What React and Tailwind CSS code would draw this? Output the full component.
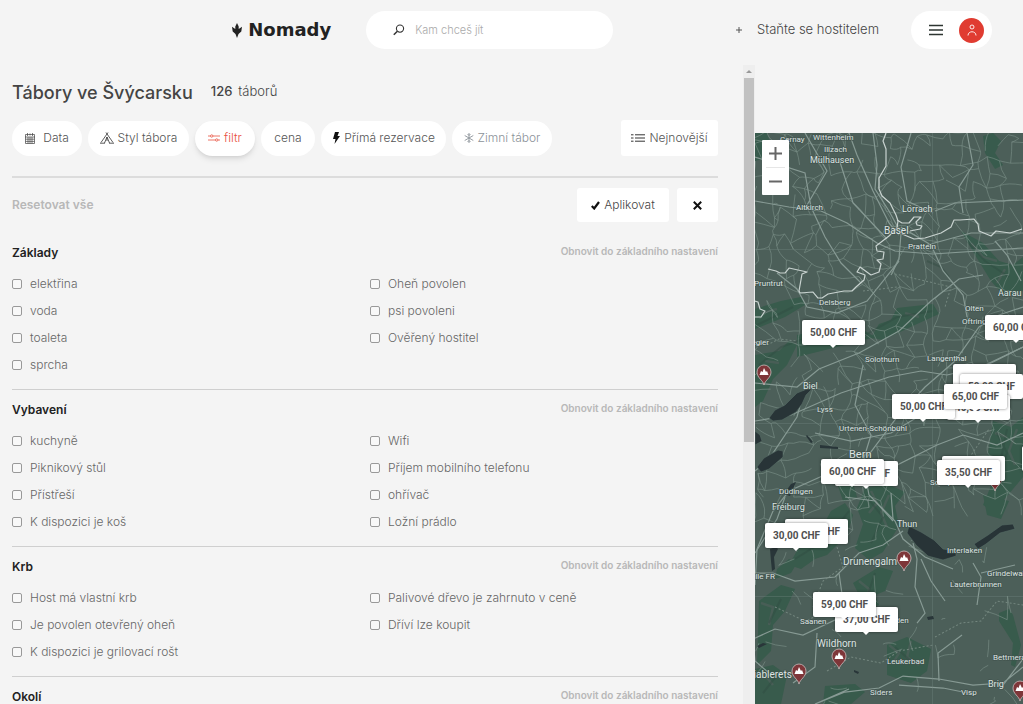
import React from 'react';

const groups = [
  {
    title: 'Základy',
    left: ['elektřina', 'voda', 'toaleta', 'sprcha'],
    right: ['Oheň povolen', 'psi povoleni', 'Ověřený hostitel'],
  },
  {
    title: 'Vybavení',
    left: ['kuchyně', 'Piknikový stůl', 'Přístřeší', 'K dispozici je koš'],
    right: ['Wifi', 'Příjem mobilního telefonu', 'ohřívač', 'Ložní prádlo'],
  },
  {
    title: 'Krb',
    left: ['Host má vlastní krb', 'Je povolen otevřený oheň', 'K dispozici je grilovací rošt'],
    right: ['Palivové dřevo je zahrnuto v ceně', 'Dříví lze koupit'],
  },
  { title: 'Okolí', left: [], right: [] },
];

// x, y, text, font size
const places = [
  [25, 9, 'Cernay', 8], [58, 7, 'Wittenheim', 8], [69, 19, 'Illzach', 8], [55, 30, 'Mülhausen', 9],
  [41, 77, 'Altkirch', 8], [147, 79, 'Lörrach', 9], [129, 101, 'Basel', 10], [153, 116, 'Pratteln', 8],
  [-1, 153, 'Pruntrut', 8], [64, 172, 'Delsberg', 8], [243, 163, 'Aarau', 9], [210, 178, 'Olten', 8],
  [207, 191, 'Oftringen', 8], [-8, 212, 'Tegier', 8], [110, 229, 'Solothurn', 8], [172, 228, 'Langenthal', 8],
  [48, 256, 'Biel', 9], [62, 279, 'Lyss', 8], [84, 298, 'Urtenen-Schönbühl', 8], [94, 325, 'Bern', 11],
  [175, 352, 'Schüpfheim', 8], [24, 361, 'Düdingen', 8], [17, 377, 'Freiburg', 9], [142, 394, 'Thun', 9],
  [88, 432, 'Drunengalm', 10], [192, 420, 'Interlaken', 8], [232, 443, 'Grindelwald', 8], [195, 454, 'Lauterbrunnen', 8],
  [-4, 446, 'ulle FR', 8], [45, 491, 'Saanen', 8], [120, 490, 'Frutigden', 8], [62, 514, 'Wildhorn', 10],
  [132, 531, 'Leukerbad', 8], [238, 527, 'Bettmeralp', 8], [-8, 545, 'Diablerets', 10], [115, 562, 'Siders', 8],
  [206, 562, 'Visp', 8], [233, 554, 'Brig', 9],
];

const pins = [[9, 252], [240, 358], [149, 438], [84, 536], [44, 551], [265, 568]];

// later entries lie on top of earlier ones
const prices = [
  [47, 187, '50,00 CHF'], [230, 182, '60,00 CHF'], [198, 231, ''], [205, 241, '50,00 CHF'],
  [192, 262, '40,65 CHF'], [137, 261, '50,00 CHF'], [189, 251, '65,00 CHF'], [80, 328, '45,00 CHF'],
  [66, 326, '60,00 CHF'], [187, 323, ''], [182, 327, '35,50 CHF'], [30, 386, '35,00 CHF'],
  [10, 390, '30,00 CHF'], [80, 474, '37,00 CHF'], [58, 459, '59,00 CHF'], [267, 313, ''],
];

// small local roads: a jittered mesh, sparse in the mountains
function localRoads() {
  let seed = 7;
  const rnd = () => {
    seed = (seed * 16807) % 2147483647;
    return seed / 2147483647;
  };
  const step = 13;
  const cols = 23;
  const rows = 46;
  const pts = [];
  for (let r = 0; r < rows; r++) {
    for (let c = 0; c < cols; c++) {
      pts.push([c * step - 5 + rnd() * 12, r * step - 5 + rnd() * 12]);
    }
  }
  let d = '';
  const link = (a, b) => {
    const mx = (a[0] + b[0]) / 2 + rnd() * 6 - 3;
    const my = (a[1] + b[1]) / 2 + rnd() * 6 - 3;
    d += `M${a[0].toFixed(1)} ${a[1].toFixed(1)}Q${mx.toFixed(1)} ${my.toFixed(1)} ${b[0].toFixed(1)} ${b[1].toFixed(1)}`;
  };
  for (let r = 0; r < rows - 1; r++) {
    for (let c = 0; c < cols - 1; c++) {
      const p = pts[r * cols + c];
      let chance = 0.6;
      if (p[1] > 370) chance = p[0] < 150 && p[1] < 410 ? 0.4 : 0.06;
      if (p[1] > 180 && p[1] < 240 && p[0] < 80) chance = 0.35;
      if (rnd() < chance) link(p, pts[r * cols + c + 1]);
      if (rnd() < chance) link(p, pts[(r + 1) * cols + c]);
      if (rnd() < chance * 0.3) link(p, pts[(r + 1) * cols + c + 1]);
    }
  }
  return d;
}

const roads = localRoads();

function MapCanvas() {
  return (
    <svg viewBox="0 0 268 571" preserveAspectRatio="xMinYMin slice" className="block h-full w-full" aria-label="Mapa">
      <rect width="268" height="571" fill="#4c5f59" />
      <g fill="#365b4b" opacity=".9">
        <path d="M0 0h12l4 12-8 14-8 2zM206 98l22 12 16 18 14 4 10-8v34l-18 6-14-16-16-26zM228 3l10-3 8 8-6 12 8 12-8 4-10-16z" />
        <path d="M0 176l26-8 20-4 4 8-20 12-30 12zM142 175l36-4 6 10-22 10-34 16-12-2 8-14 12-4zM0 222l24-4 10-10 8 4-10 20-14 14-10 22-8 6zM42 202l30-6 38 2 10 6-38 10-40 10z" />
        <path d="M238 288l18 6 12-10v60l-20 24-6 12-14-8 10-24-6-20zM110 355l22-4 18 8-10 14 4 20-16 26-14 8-14-12 8-24-6-16zM82 350h16l4 14-14 4z" />
        <path d="M76 378l14-8 8 12-6 20-20 20-12 4-14 10-12-4 10-18 20-14zM34 426l8 4-6 10-16 6 2-10zM228 362l26 6-8 18-14-4zM4 468l22-16 14 4-10 22-12 14-2 26-14 14zM132 512l20-8 24 12-4 22-16 12-24-8zM244 480l10-4 4 6 8 30-6 22-4-2 2-22-14-22z" />
        <path d="M0 536l18-4 14 10-6 29H0zM98 450l26-16 14 4-8 20-10 4 4 10-10 2-8-8zM70 553l30-2 10 8-14 12H68z" />
      </g>
      <g stroke="#4c5f59" strokeWidth="2.500" fill="none" opacity=".8">
        <path d="M134 512l10 8-6 10M156 508l-4 16 12 8M6 470l12 4-4 18M104 448l10 8-2 14M8 540l10 12M240 300l12 4M262 296l-8 22 6 14M236 338l14 4M116 358l6 12-8 10M134 362l-8 18 6 14" />
        <path d="M216 110l12 14 14 4M250 136l-8 14M6 180l16-4M10 228l14 2M64 200l20 4M150 180l14 4" />
      </g>
      <g stroke="#2f4a40" strokeWidth="2" fill="none" opacity=".4">
        <path d="M4 232l22-18 34-12M110 202l32-18 36-6M212 108l18 20 24 16M2 192l36-18M242 300l10 20-12 26M252 296l-6 30M40 426l32-20 22-28M110 362l18 22-12 26M14 490l12-24M8 560l14-18" />
        <path d="M172 128l14 6 8 10M120 440l-8 24M140 514l16 14" />
      </g>
      <path d={roads} fill="none" stroke="#7b8f88" strokeWidth=".9" opacity=".7" />
      <g fill="none" stroke="#879a94" strokeWidth="1.200">
        <path d="M0 68l34 6 32 4 26 12 30 20 18 8 38 3 90-6" />
        <path d="M118 0l4 32-2 24 14 22 12 22-2 26-8 16M94 0l8 22 16 36 16 32 10 12M84 26l14 44 34 36M0 24l50 16 6 34 14 30 16 26 20 20M50 0l22 38-20 34" />
        <path d="M146 94l30 18 12 26 20 24 4 22M240 108l12 14 14 26M172 112l44-12h52M180 78l20-8 68-3M212 0l6 32-14 22 4 26M156 0l-10 34 6 34 26 12" />
        <path d="M22 140l20 16 10 18 30 6 30-12 32-40M0 250l42 4 22-18 40-16 40-22 32-30 28-22 24-4M0 288l36-6 50-22 48-16 32-6 26 4 34-8 42-20" />
        <path d="M50 254l-8 30-28 42-14 12M108 232l-8 40 16 30-8 26M108 326l-34 14-40 18-16 20-16 38-2 36M108 326l34 6 40-20 26-10 34 10 26-12M108 330l6 32 26 26 8 18 22 18 28 12M112 324l30-40 28-30 30-26 24-34 20-12 24-8" />
        <path d="M60 300l36 8 40-8 50-30 30-30 52-26M90 364l30 4 18 20M136 360l2 26M0 440l18 0 22 8 40-4 24-24 24-8 20-14M84 440l4 28-6 18-34 16-28-6-22 10 2 22 14 12" />
        <path d="M62 500l-2 34-22 16M158 410l4 16-2 28 10 26-8 10M166 426l10 22 14 20M218 430l8 14-4 28M226 440l34-8M0 420l22-34 8-22" />
        <path d="M60 571l30-12 34-4 24-12 36 3 34 6 30-2 20-16M144 552l44 3 30 6M184 548l-1-28 24-18M248 552l20-26M94 556l-34 15M118 470l8 20" />
      </g>
      <path d="M177.500 0v571M0 463.500h268M0 290.500h268M0 116.500h268" stroke="#728780" strokeWidth=".6" opacity=".6" fill="none" />
      <path d="M12 212l12-6 18 2M108 158l34-4M136 140l60 14-6 20M212 328l22-32M82 414l6 20-20 14-10 26M180 504l26-14 20-2 16-20 26 4M72 538l24-14 30 6 18-12 34-6M20 474l30 14 14-6" fill="none" stroke="#74877f" strokeWidth="1" strokeDasharray="2 2" />
      <g fill="#283437" stroke="#566b65" strokeWidth=".6">
        <path d="M52 256l-10 4-12 12-10 5-6 8 4 3 9-1 14-8 6-8 4-9 6-6zM28 318v6l-14 12-8 3-4-5 7-9 14-8zM0 298l5 4 2 6-7 4z" />
        <path d="M154 393l12 6 13 8 9 9 13 2v5l-13 4-15-4-12-11-9-12zM219 411l14-9 14-10 11-1 2 5-15 4-14 11-8 5z" />
      </g>
      <path d="M15 416l6-2 2 2-4 8 1 12-3 2-1-10zM65 312l18 2v2l-18-1zM52 302l6 7-2 1-5-7zM29 361l7-10 5-2-6 14zM172 484l6-1 1 3-6 1zM2 513l6-3 4 1-8 4zM99 537l5 2-1 2-4-2z" fill="#293639" />
      <g fill="none" stroke="#c9d3d0" strokeWidth="1.200" strokeLinejoin="round">
        <path d="M131 0l-3 8 3 8v17l-7 12v11l3 7 8 7 6 12 2 6-1 7-8 8-13 10 1 5 7 1-1 7-6 1 4 4-2 8-8 3-11-8-3 5 8 3-1 5-8 7-4 4h-8l-16 3-6 4h-4l-5-6-13 1-1-2 3-17 5-2-9-2-9-2-4 5h-5l-4-2-8-2" />
        <path d="M142 87l5 3 7 0 5-6h7l-5 5 1 3 5 1-2 3-10 2M147 101l12 5 11-1 16-5 10-6 3-7 6 0 14-1 4 5 1 7 12 5 5-5 14 2 9-3 3-1" />
        <path d="M0 168l3 1 2 7 5 2-4 6H0" />
      </g>
      <g fontFamily="Roboto, 'Liberation Sans', sans-serif" fill="#dde3e1" stroke="#3f504b" strokeWidth="1.500" strokeOpacity=".7" paintOrder="stroke">
        {places.map(([x, y, name, size]) => (
          <text key={name} x={x} y={y} fontSize={size}>{name}</text>
        ))}
      </g>
      {pins.map(([x, y]) => (
        <g key={`${x}-${y}`} transform={`translate(${x} ${y})`}>
          <path d="M0 0C-1-5-7-7-7-13a7 7 0 0 1 14 0C7-7 1-5 0 0z" fill="#7e3639" stroke="#c9bcbc" strokeWidth=".8" />
          <path d="M-4.500-10l1.500-4 1.500 1 1.500-4 2 4 1-1 1.500 4z" fill="#fff" />
        </g>
      ))}
    </svg>
  );
}

function LogoMark() {
  return (
    <svg viewBox="0 0 10 15" className="h-[15px] w-[10px]" fill="#222" aria-hidden="true">
      <path d="M5 0l1.700 3.500v2.500L10 3.800 9.300 8.500 6.500 11 5 15l-1.500-4L.7 8.500 0 3.800 3.300 6V3.500z" />
    </svg>
  );
}

function Header() {
  return (
    <header className="flex h-[60px] shrink-0 items-center pl-[22.7%] pr-[31px]">
      <a href="#" className="flex items-center gap-1.5 text-[#222]">
        <LogoMark />
        <span className="font-['DejaVu_Sans',sans-serif] text-[18px] font-bold leading-6">Nomady</span>
      </a>
      <label className="ml-[35px] flex h-[38px] w-[247px] items-center gap-2.5 rounded-full bg-white pl-[27px] pr-5">
        <svg viewBox="0 0 12 12" className="size-3 shrink-0" fill="none" stroke="#333" strokeWidth="1.100" aria-hidden="true">
          <circle cx="7" cy="4.600" r="3.600" />
          <path d="M4.400 7.200L.8 10.800" strokeWidth="1.500" />
        </svg>
        <input type="text" aria-label="Kam chceš jít" placeholder="Kam chceš jít" className="w-full text-[11px] font-light outline-none placeholder:text-[#aaa]" />
      </label>
      <a href="#" className="ml-auto flex items-center gap-3.5 text-[#444]">
        <svg viewBox="0 0 8 8" className="size-2" stroke="#555" aria-hidden="true"><path d="M4 1v6M1 4h6" /></svg>
        <span className="whitespace-nowrap text-[13px] font-light">Staňte se hostitelem</span>
      </a>
      <div className="ml-8 flex h-[38px] items-center gap-4 rounded-full bg-white pl-[18px] pr-2">
        <button type="button" aria-label="Menu">
          <svg viewBox="0 0 14 12" className="h-3 w-3.5" stroke="#2d3531" strokeWidth="1.500" aria-hidden="true"><path d="M0 1.500h14M0 6h14M0 10.500h14" /></svg>
        </button>
        <button type="button" aria-label="Účet" className="flex size-[25px] items-center justify-center rounded-full bg-[#e03c31]">
          <svg viewBox="0 0 10 12" className="h-3 w-2.5" fill="none" stroke="#fff" strokeWidth=".9" aria-hidden="true">
            <circle cx="5" cy="3" r="2" />
            <path d="M1 11.500c0-5 8-5 8 0" />
          </svg>
        </button>
      </div>
    </header>
  );
}

function Filters() {
  const chip = 'flex h-[35px] items-center justify-center gap-1 whitespace-nowrap rounded-full bg-white';
  return (
    <div className="flex items-center gap-1.5 border-b-2 border-[#dcdcdc] pb-5 text-[12px] font-light text-[#555]">
      <button type="button" className={`${chip} w-[70px]`}>
        <svg viewBox="0 0 10 11" className="mr-1 h-[11px] w-2.5" fill="none" stroke="#444" strokeWidth=".7" aria-hidden="true">
          <path d="M.5 1.500h9v9h-9zM0 4h10M.5 6.200h9M.5 8.400h9M3 4v6.500M5 4v6.500M7 4v6.500M2.500 0v3M5 .5v2M7.500 0v3" />
        </svg>
        Data
      </button>
      <button type="button" className={`${chip} w-[101px]`}>
        <svg viewBox="0 0 14 12" className="h-3 w-3.5" fill="none" stroke="#333" strokeWidth=".8" aria-hidden="true">
          <path d="M6 .5L13 10.500M8 .5L1 10.500M7 5l-2.500 6M7 5l2.500 6M7 5v4M0 11.200h5M9 11.200h5" />
        </svg>
        Styl tábora
      </button>
      <button type="button" className={`${chip} w-[60px] text-[#e8503f] shadow-md`}>
        <svg viewBox="0 0 12 8" className="h-2 w-3" fill="none" stroke="#e8503f" strokeWidth=".8" aria-hidden="true">
          <path d="M0 2h2.500M5 2h7M0 6h7.500M10 6h2" />
          <circle cx="3.700" cy="2" r="1.200" />
          <circle cx="8.700" cy="6" r="1.200" />
        </svg>
        filtr
      </button>
      <button type="button" className={`${chip} w-[54px]`}>cena</button>
      <button type="button" className={`${chip} w-[125px]`}>
        <svg viewBox="0 0 8 12" className="h-3 w-2" fill="#111" aria-hidden="true"><path d="M3 0h4L5.500 4H8L2.500 12l1-5H1z" /></svg>
        Přímá rezervace
      </button>
      <button type="button" className={`${chip} w-[100px] text-[#8b9299]`}>
        <svg viewBox="0 0 10 10" className="size-2.5" stroke="#8b9299" fill="none" aria-hidden="true">
          <path d="M5 0v10M.7 2.500l8.600 5M.7 7.500l8.600-5M3.500 1L5 2.500 6.500 1M3.500 9L5 7.500 6.500 9" strokeWidth=".9" />
        </svg>
        Zimní tábor
      </button>
      <button type="button" className="ml-auto flex h-9 w-[97px] items-center justify-center gap-1 whitespace-nowrap rounded-[3px] bg-white">
        <svg viewBox="0 0 14 8" className="h-2 w-3.5" stroke="#333" strokeWidth="1" aria-hidden="true">
          <path d="M0 .8h2.500M4 .8h10M0 4h2.500M4 4h10M0 7.200h2.500M4 7.200h10" />
        </svg>
        Nejnovější
      </button>
    </div>
  );
}

function Options({ items }) {
  return (
    <ul>
      {items.map((item) => (
        <li key={item} className="h-[27px]">
          <label className="flex h-full items-center gap-2 text-[12px] font-light text-[#666]">
            <input type="checkbox" className="size-2.5 appearance-none rounded-[2px] border border-[#999] bg-[#f8f8f8] checked:bg-[#e03c31]" />
            {item}
          </label>
        </li>
      ))}
    </ul>
  );
}

function Group({ group }) {
  return (
    <section className="border-b border-[#cfcfcf] pb-[11px] pt-2.5">
      <div className="mb-[7px] flex h-5 items-center justify-between">
        <h3 className="text-[12px] font-semibold text-[#222]">{group.title}</h3>
        <button type="button" className="-mt-1 text-[10px] font-semibold text-[#b8b8b8]">Obnovit do základního nastavení</button>
      </div>
      <div className="grid grid-cols-2 gap-x-2.5">
        <Options items={group.left} />
        <Options items={group.right} />
      </div>
    </section>
  );
}

function MapPanel() {
  return (
    <aside className="relative mt-[73px] w-[26.2%] shrink-0 overflow-hidden">
      <MapCanvas />
      {prices.map(([x, y, price]) => (
        <button
          key={`${x}-${y}`}
          type="button"
          aria-label={price || 'Tábor'}
          className="absolute h-[25px] w-[63px] whitespace-nowrap rounded-[2px] bg-white font-['Roboto','Liberation_Sans',sans-serif] text-[10px] font-bold text-[#505050] shadow-[0_0_3px_rgba(0,0,0,0.5)] after:absolute after:left-1/2 after:top-full after:-ml-[3px] after:border-x-[3px] after:border-t-[3px] after:border-x-transparent after:border-t-white"
          style={{ left: x, top: y }}
        >
          {price}
        </button>
      ))}
      <div className="absolute left-[7px] top-[7px] flex w-[27px] flex-col rounded-[1px] bg-white px-1">
        <button type="button" aria-label="Přiblížit" className="flex h-[28px] items-center justify-center border-b border-[#e6e6e6]">
          <svg viewBox="0 0 13 13" className="size-[13px]" stroke="#666" strokeWidth="2" aria-hidden="true"><path d="M6.500 0v13M0 6.500h13" /></svg>
        </button>
        <button type="button" aria-label="Oddálit" className="flex h-[27px] items-center justify-center">
          <svg viewBox="0 0 13 13" className="size-[13px]" stroke="#666" strokeWidth="2" aria-hidden="true"><path d="M0 6.500h13" /></svg>
        </button>
      </div>
    </aside>
  );
}

function App() {
  return (
    <div className="flex h-screen flex-col overflow-hidden bg-[#f4f4f4] font-['Inter','Liberation_Sans',sans-serif]">
      <Header />
      <div className="flex min-h-0 flex-1">
        <main className="min-w-0 flex-1 overflow-hidden pl-3 pr-[25px] pt-[18px]">
          <div className="flex h-7 items-center gap-[18px] text-[#444]">
            <h1 className="text-[18px] font-medium">Tábory ve Švýcarsku</h1>
            <p className="text-[13px] font-light"><span className="mr-1.5 font-medium">126</span>táborů</p>
          </div>
          <div className="mt-[14px]">
            <Filters />
          </div>
          <div className="flex items-center gap-2 pb-[11px] pt-2.5">
            <button type="button" className="mr-auto text-[12px] font-semibold text-[#b8b8b8]">Resetovat vše</button>
            <button type="button" className="flex h-[34px] w-[92px] items-center justify-center gap-1 rounded-[3px] bg-white text-[12px] font-light text-[#444]">
              <svg viewBox="0 0 9 9" className="size-[9px]" fill="none" stroke="#111" strokeWidth="2.200" aria-hidden="true"><path d="M.8 5l2.400 2.500L8 1" /></svg>
              Aplikovat
            </button>
            <button type="button" aria-label="Zavřít" className="flex h-[34px] w-[41px] items-center justify-center rounded-[3px] bg-white">
              <svg viewBox="0 0 9 9" className="size-[9px]" stroke="#111" strokeWidth="2" aria-hidden="true"><path d="M.8.8l7.400 7.400M8.200.8L.8 8.200" /></svg>
            </button>
          </div>
          {groups.map((group) => (
            <Group key={group.title} group={group} />
          ))}
        </main>
        <div className="mt-[5px] flex w-3 shrink-0 flex-col items-center bg-[#eeeeee]" aria-hidden="true">
          <div className="flex h-[13px] items-center">
            <div className="border-x-[3px] border-b-[3px] border-x-transparent border-b-[#999]" />
          </div>
          <div className="h-[57%] w-2.5 bg-[#c1c1c1]" />
        </div>
        <MapPanel />
      </div>
    </div>
  );
}

export default App;
